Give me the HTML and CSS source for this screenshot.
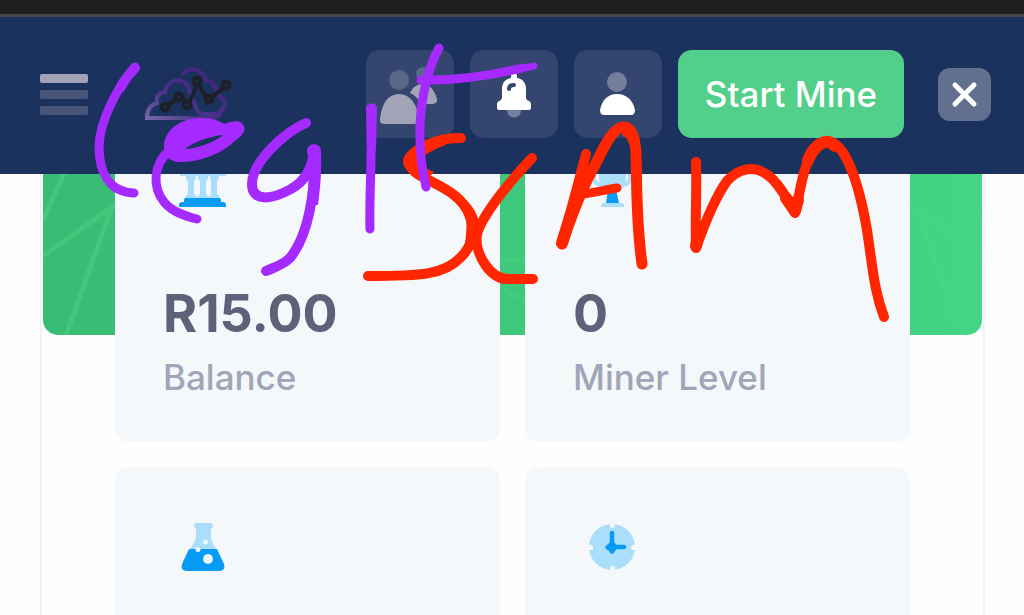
FILE: index.html
```
<!DOCTYPE html>
<html lang="en">
<head>
	<meta charset="UTF-8">
	<meta name="viewport" content="width=device-width, initial-scale=1">
	<title>Dashboard</title>
	<link rel="stylesheet" href="styles.css">
</head>
<body>
	<div class="statusbar"></div>
	<header class="header">
		<button class="menu" type="button" aria-label="Menu">
			<span></span>
			<span></span>
			<span></span>
		</button>
		<a class="logo" href="#" aria-label="Home">
			<svg viewBox="0 0 88 54" width="88" height="54">
				<defs>
					<linearGradient id="cloud" x1="0" y1="1" x2="1" y2="0">
						<stop offset="0" stop-color="#7466a8"/>
						<stop offset="0.35" stop-color="#49348a"/>
						<stop offset="1" stop-color="#42207f"/>
					</linearGradient>
				</defs>
				<path fill="none" stroke="url(#cloud)" stroke-width="4" d="M37 7C45 0 57 1 61 13C68 14 72 20 71 27C79 30 82 37 77 43C75 46 72 47 68 47H58C50 46 51 37 47 31C45 25 45 17 37 14C29 11 21 17 20 25C13 26 11 30 12 36C5 38 2 43 2 51H66C70 51 73 50 76 46"/>
				<g fill="#1f2c4c" stroke="#1c2028" stroke-width="4">
					<path d="M22 39L32 32M37 29L42 37M44 36L51 20M54 19L62 31M66 31L78 21"/>
					<circle cx="20" cy="40" r="3.5"/>
					<circle cx="34" cy="30" r="3.5"/>
					<circle cx="42" cy="38" r="3.5"/>
					<circle cx="52" cy="14" r="3.5"/>
					<circle cx="64" cy="32" r="3.5"/>
					<circle cx="81" cy="18" r="3.5"/>
				</g>
			</svg>
		</a>
		<nav class="actions">
			<button class="tool" type="button" aria-label="Users">
				<svg viewBox="0 0 88 88" width="88" height="88">
					<g fill="#5b6787">
						<circle cx="33" cy="30" r="10"/>
						<circle cx="57" cy="24" r="7"/>
					</g>
					<path fill="#a2a3b7" d="M14 69C16 53 22 44 33 44S51 54 53 68Q53 74 47 74H19Q13 74 14 69ZM44 43C47 37 51 34 57 34C65 34 69 42 71 49Q72 53 67 54H55Q51 46 44 43Z"/>
				</svg>
			</button>
			<button class="tool" type="button" aria-label="Notifications">
				<svg viewBox="0 0 88 88" width="88" height="88">
					<path fill="#7380a0" d="M37 60H51C51 70 37 70 37 60Z"/>
					<path fill="#fff" d="M42 24H46Q47 24 47 28C53 29 56 33 56 39V48Q56 50 59 51Q61 52 61 54V58Q61 60 59 60H29Q27 60 27 58V54Q27 52 29 51Q32 50 32 47V39C32 33 35 29 41 28Q41 24 42 24Z"/>
					<path fill="none" stroke="#34466f" stroke-width="4" stroke-linecap="round" d="M39 39Q39 35 44 35"/>
				</svg>
			</button>
			<button class="tool" type="button" aria-label="Profile">
				<svg viewBox="0 0 88 88" width="88" height="88">
					<circle cx="43" cy="32" r="10" fill="#737e9b"/>
					<path fill="#fff" d="M26 60C28 50 34 44 43 44S59 50 61 60Q61 65 57 65H30Q26 65 26 60Z"/>
				</svg>
			</button>
			<button class="start" type="button">Start Mine</button>
		</nav>
		<button class="close" type="button" aria-label="Close">
			<svg viewBox="0 0 53 53" width="53" height="53">
				<path fill="none" stroke="#fff" stroke-width="5" stroke-linecap="round" d="M17 17L36 36M36 17L17 36"/>
			</svg>
		</button>
	</header>

	<main class="panel">
		<div class="banner">
			<svg viewBox="0 0 939 231" preserveAspectRatio="none" width="100%" height="100%">
				<g fill="none" stroke="#5be08f" stroke-opacity="0.3" stroke-width="5">
					<path d="M0 116L37 35M0 152L69 103L23 231M69 103L120 60"/>
					<path stroke-opacity="0.18" d="M867 100L939 152M872 100L918 231M910 60L939 116M450 156H490M450 180L500 205"/>
				</g>
			</svg>
		</div>
		<div class="cards">
			<section class="card">
				<svg viewBox="0 0 80 80" width="80" height="80">
					<path fill="#aadefa" d="M40 15L63 27V32H17V27ZM17 29H63V31Q63 32 61 32H19Q17 32 17 31Z"/>
					<path fill="#aadefa" d="M23 32H33V35L31 37V50L34 53V55H22V53L25 50V37L23 35ZM35 32H45V35L43 37V50L46 53V55H34V53L37 50V37L35 35ZM47 32H56V35L54 37V50L57 53V55H46V53L48 50V37L47 35Z"/>
					<path fill="#079bf5" d="M21 56Q21 54 23 54H56Q58 54 58 56V58H60Q63 58 63 61V63H16V61Q16 58 19 58H21Z"/>
				</svg>
				<strong>R15.00</strong>
				<span>Balance</span>
			</section>
			<section class="card">
				<svg viewBox="0 0 80 80" width="80" height="80">
					<path fill="none" stroke="#aadefa" stroke-width="4" d="M26 24H21V33Q21 41 31 41M51 24H57V33Q57 41 48 41"/>
					<path fill="#aadefa" d="M26 18H53V34Q53 45 44 46H35Q26 43 26 34ZM28 63Q28 59 31 59H48Q51 59 51 63Z"/>
					<path fill="#079bf5" d="M35 46H43L46 59H33Z"/>
				</svg>
				<strong>0</strong>
				<span>Miner Level</span>
			</section>
			<section class="card">
				<svg viewBox="0 0 80 80" width="80" height="80">
					<path fill="#aadefa" d="M33 16H47Q50 16 50 18.500Q50 21 48 21V31Q49 36 54 43H26Q32 35 33 31V21Q31 21 31 18.500Q31 16 33 16Z"/>
					<path fill="#079bf5" d="M26 42H54L61 57Q63 64 56 64H24Q17 64 19 57Z"/>
					<g fill="#e9f7fe">
						<circle cx="42.500" cy="35" r="2.500"/>
						<circle cx="35" cy="42.500" r="2.500"/>
						<circle cx="45" cy="52" r="5"/>
					</g>
				</svg>
			</section>
			<section class="card">
				<svg viewBox="0 0 80 80" width="80" height="80">
					<circle cx="39" cy="40" r="23" fill="#aadefa"/>
					<g fill="#f3f7fb">
						<rect x="37" y="15" width="5" height="6" rx="2"/>
						<rect x="37" y="59" width="5" height="6" rx="2"/>
						<rect x="14" y="38" width="6" height="5" rx="2"/>
						<rect x="58" y="38" width="6" height="5" rx="2"/>
					</g>
					<path fill="none" stroke="#079bf5" stroke-width="4.500" stroke-linecap="round" d="M39 26V40H51"/>
					<path fill="#079bf5" d="M37 35H41L45 40L42 44Q39 50 36 44L33 42Q31 40 34 38Z"/>
				</svg>
			</section>
		</div>
	</main>

	<!-- hand-drawn notes over the page -->
	<svg class="scribble" viewBox="0 0 1024 615" aria-hidden="true">
		<g class="red">
			<path class="w10" d="M461 138C439 137 411 149 409 161C409 176 435 180 454 195C476 212 478 242 460 258C444 275 420 276 368 276"/>
			<path class="fill" d="M440 137C420 141 402 152 403 162C404 170 412 176 426 181L434 172C424 168 420 164 421 160C423 155 434 149 446 145Z"/>
			<path class="w10" d="M532 158C513 178 480 216 476 238C477 256 490 279 508 279H533"/>
			<path class="fill" d="M466 200C474 207 479 217 479 225C483 235 482 247 479 257L472 248L462 262C466 244 468 220 466 200Z"/>
			<path class="w11" d="M562 244C572 214 584 184 596 163C607 140 616 126 624 127C632 128 635 138 636 153C637 190 636 220 642 264"/>
			<path class="fill" d="M619 123C629 120 638 129 640 143L642 182L634 182C634 160 630 137 623 136Z"/>
			<path class="w10" d="M586 154L562 244"/>
			<path class="w12" d="M579 188L562 243"/>
			<path class="w9" d="M583 194C592 193 605 190 617 188"/>
			<path class="w10" d="M696 162C697 188 695 220 696 248C702 231 714 199 727 181C738 169 753 165 766 174C777 180 788 200 795 213C800 194 803 165 813 152C823 138 835 138 845 156C856 175 862 201 867 230C873 270 874 290 884 317"/>
			<path class="w12" d="M696 246L699 230M786 198L795 211L798 200"/>
			<path class="w12" d="M808 160C815 144 826 137 835 146"/>
		</g>
		<g class="purple">
			<path class="w9" d="M135 67C118 86 100 120 99 146C99 171 108 192 134 193"/>
			<path class="w10" d="M135 68C129 74 124 81 120 88"/>
			<path class="fill" fill-rule="evenodd" d="M164 145C165 130 181 118 200 118C211 118 218 120 224 124C233 121 240 119 244 126C247 133 238 138 230 145C218 155 198 162 181 162C174 162 164 160 164 145ZM185 149C195 149 214 143 223 135C211 136 193 142 185 149Z"/>
			<path class="w9" d="M170 150C153 164 152 187 164 202C172 212 185 216 197 219"/>
			<path class="w10" d="M306 123C285 132 252 162 252 184C252 203 273 199 291 189C304 182 313 168 314 150"/>
			<path class="w10" d="M314 151C316 192 308 236 290 258C283 265 275 267 266 271"/>
			<path class="fill" d="M307 151C307 142 321 142 321 151C322 170 320 190 318 205L307 205C309 185 310 165 307 151Z"/>
			<path class="fill" d="M366 108C366 102 377 102 377 108L376 150L367 150Z"/>
			<path class="w9" d="M371 130C372 165 369 195 370 229"/>
			<path class="w9" d="M439 48C425 73 419 111 420 139C420 158 423 174 426 187"/>
			<path class="w9" d="M421 80C458 81 493 75 522 68"/>
			<path class="w7" d="M515 70L534 66"/>
		</g>
	</svg>
</body>
</html>
```

FILE: styles.css
```
*{
	box-sizing: border-box;
	padding: 0;
	margin: 0;
}
body{
	position: relative;
	min-height: 100vh;
	background: #fefefe;
	font-family: Inter, "Liberation Sans", sans-serif;
	overflow: hidden;
}
svg{
	display: block;
}
button{
	border: none;
	font: inherit;
	cursor: pointer;
}
.statusbar{
	height: 17px;
	background: #1f1f1f;
	border-bottom: 3px solid #43474c;
}
.header{
	position: relative;
	z-index: 1;
	display: flex;
	align-items: center;
	padding: 33px 33px 36px 40px;
	background: #1c325e;
}
.menu{
	display: grid;
	gap: 7px;
	width: 48px;
	background: none;
}
.menu span{
	height: 9px;
	border-radius: 2px;
	background: #485779;
}
.menu span:first-child{
	background: #a2a3b7;
}
.logo{
	margin-left: 57px;
}
.actions{
	display: flex;
	gap: 16px;
	margin-left: auto;
}
.tool{
	width: 88px;
	height: 88px;
	border-radius: 14px;
	background: #34466f;
}
.start{
	width: 226px;
	border-radius: 14px;
	background: #52cf8a;
	color: #fff;
	font-size: 35px;
	font-weight: 500;
}
.close{
	margin-left: 34px;
	border-radius: 12px;
	background: #62708f;
}
.panel{
	display: grid;
	margin: -70px 39px 0 40px;
	border: 2px solid #edf3f5;
	border-width: 0 2px;
}
.banner{
	grid-area: 1 / 1;
	height: 231px;
	margin: 0 1px;
	border-radius: 0 0 15px 15px;
	background: linear-gradient(90deg, #38bc74, #44d483);
	overflow: hidden;
}
.cards{
	grid-area: 1 / 1;
	display: grid;
	grid-template-columns: 1fr 1fr;
	gap: 25px;
	padding: 0 73px 25px;
}
.card{
	min-height: 338px;
	padding: 40px 48px;
	border-radius: 14px;
	background: #f4f8fb;
}
.card strong{
	display: block;
	margin-top: 56px;
	color: #5e6278;
	font-size: 52px;
	line-height: 68px;
}
.card span{
	display: block;
	margin-top: 4px;
	color: #a1a5b7;
	font-size: 35px;
	font-weight: 500;
	line-height: 50px;
}
.scribble{
	position: absolute;
	z-index: 2;
	top: 0;
	left: 0;
	width: 100%;
	pointer-events: none;
	fill: none;
	stroke-linecap: round;
	stroke-linejoin: round;
}
.red{
	stroke: #ff2600;
}
.purple{
	stroke: #a52aff;
}
.fill{
	stroke: none;
}
.red .fill{
	fill: #ff2600;
}
.purple .fill{
	fill: #a52aff;
}
.w7{
	stroke-width: 7px;
}
.w9{
	stroke-width: 9px;
}
.w10{
	stroke-width: 10px;
}
.w11{
	stroke-width: 11px;
}
.w12{
	stroke-width: 12px;
}
```
